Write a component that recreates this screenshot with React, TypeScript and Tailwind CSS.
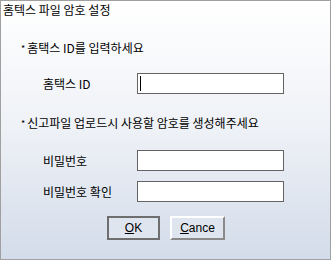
import React from 'react';

const font = { fontFamily: '"Noto Sans CJK KR", "Noto Sans", sans-serif' };

function Note({ text }: { text: string }) {
  return (
    <div className="flex items-center pl-[20px] h-[16px] leading-[16px] text-[12px] text-black">
      <span className="text-[9px] leading-[9px] mr-[2px] mt-[1px]">*</span>
      <span>{text}</span>
    </div>
  );
}

function Field({ label, caret, className }: { label: string; caret?: boolean; className?: string }) {
  return (
    <div className={`flex items-center h-[21px] ${className ?? ''}`}>
      <div className="w-[136px] pl-[42px] text-[12px] leading-[16px] text-black">{label}</div>
      <div className="relative w-[147px] h-[21px] bg-white border border-[#646464]">
        {caret && <div className="absolute left-[2px] top-[2px] w-px h-[15px] bg-black" />}
      </div>
    </div>
  );
}

export default function App() {
  return (
    <div
      className="w-[331px] h-[260px] border border-[#a0a0a0] bg-gradient-to-b from-white via-[#eef1f6] to-[#d3dcea] flex flex-col"
      style={font}
    >
      <div className="pl-[2px] pt-[1px] h-[18px] leading-[16px] text-[12px] text-black">홈텍스 파일 암호 설정</div>
      <div className="mt-[21px]">
        <Note text="홈택스 ID를 입력하세요" />
      </div>
      <Field label="홈택스 ID" caret className="mt-[17px]" />
      <div className="mt-[21px]">
        <Note text="신고파일 업로드시 사용할 암호를 생성해주세요" />
      </div>
      <Field label="비밀번호" className="mt-[19px]" />
      <Field label="비밀번호 확인" className="mt-[10px]" />
      <div className="flex mt-[14px] pl-[106px] gap-[10px]" style={{ fontFamily: '"Liberation Sans", Arial, sans-serif' }}>
        <button className="w-[53px] h-[24px] border-2 border-[#6e6e6e] bg-[#dfe5ef] text-[12px] text-black flex items-center justify-center">
          <span><span className="underline">O</span>K</span>
        </button>
        <button className="w-[55px] h-[24px] border-2 border-t-white border-l-white border-r-[#8a8a8a] border-b-[#8a8a8a] bg-[#dfe5ef] text-[12px] text-black flex items-center justify-center">
          <span><span className="underline">C</span>ance</span>
        </button>
      </div>
    </div>
  );
}
